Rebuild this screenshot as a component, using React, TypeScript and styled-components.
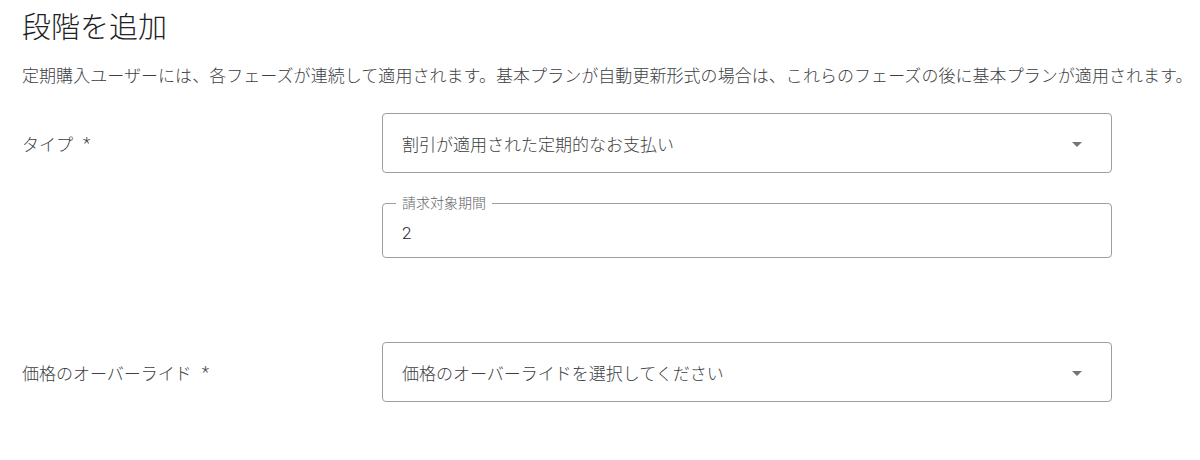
import React from 'react';
import styled, { createGlobalStyle } from 'styled-components';

const GlobalStyle = createGlobalStyle`
  html, body {
    margin: 0;
    padding: 0;
    background: #ffffff;
  }
  body {
    font-family: Roboto, 'Noto Sans CJK JP', sans-serif;
    font-weight: 300;
    color: #202124;
  }
`;

const Page = styled.div`
  width: 1200px;
  height: 460px;
  box-sizing: border-box;
  padding: 10px 22px 0;
  overflow: hidden;
`;

const Title = styled.h1`
  margin: 0;
  font-size: 29px;
  line-height: 36px;
  font-weight: 300;
  color: #202124;
`;

const Description = styled.p`
  margin: 18px 0 0;
  font-size: 17px;
  line-height: 24px;
  letter-spacing: 0.05px;
  color: #3c4043;
  white-space: nowrap;
`;

const Form = styled.div`
  display: flex;
  flex-direction: column;
  gap: 84px;
  margin-top: 25px;
`;

const Row = styled.div`
  display: grid;
  grid-template-columns: 360px 730px;
  align-items: start;
`;

const Label = styled.div`
  height: 60px;
  display: flex;
  align-items: center;
  font-size: 17px;
  color: #3c4043;
`;

const Required = styled.span`
  margin-left: 10px;
`;

const Controls = styled.div`
  display: flex;
  flex-direction: column;
  gap: 22px;
`;

const Select = styled.div`
  height: 60px;
  box-sizing: border-box;
  border: 1px solid #9e9e9e;
  border-radius: 4px;
  display: flex;
  align-items: center;
  justify-content: space-between;
  padding: 0 29px 0 19px;
  font-size: 17px;
  color: #3c4043;
`;

const Arrow = styled.span`
  width: 0;
  height: 0;
  margin-top: 2px;
  border-left: 5px solid transparent;
  border-right: 5px solid transparent;
  border-top: 5px solid #757575;
`;

const Outlined = styled.fieldset`
  margin: 0;
  height: 63px;
  box-sizing: border-box;
  border: 1px solid #9e9e9e;
  border-radius: 4px;
  padding: 0 19px;
`;

const Legend = styled.legend`
  margin-left: -6px;
  padding: 0 6px;
  font-size: 14px;
  line-height: 16px;
  color: #5f6368;
`;

const Value = styled.div`
  font-size: 17px;
  line-height: 24px;
  margin-top: 10px;
  color: #202124;
`;

const App = () => {
  return (
    <Page>
      <GlobalStyle />
      <Title>段階を追加</Title>
      <Description>
        定期購入ユーザーには、各フェーズが連続して適用されます。基本プランが自動更新形式の場合は、これらのフェーズの後に基本プランが適用されます。
      </Description>
      <Form>
        <Row>
          <Label>
            タイプ<Required>*</Required>
          </Label>
          <Controls>
            <Select>
              <span>割引が適用された定期的なお支払い</span>
              <Arrow />
            </Select>
            <Outlined>
              <Legend>請求対象期間</Legend>
              <Value>2</Value>
            </Outlined>
          </Controls>
        </Row>
        <Row>
          <Label>
            価格のオーバーライド<Required>*</Required>
          </Label>
          <Select>
            <span>価格のオーバーライドを選択してください</span>
            <Arrow />
          </Select>
        </Row>
      </Form>
    </Page>
  );
};

export default App;
